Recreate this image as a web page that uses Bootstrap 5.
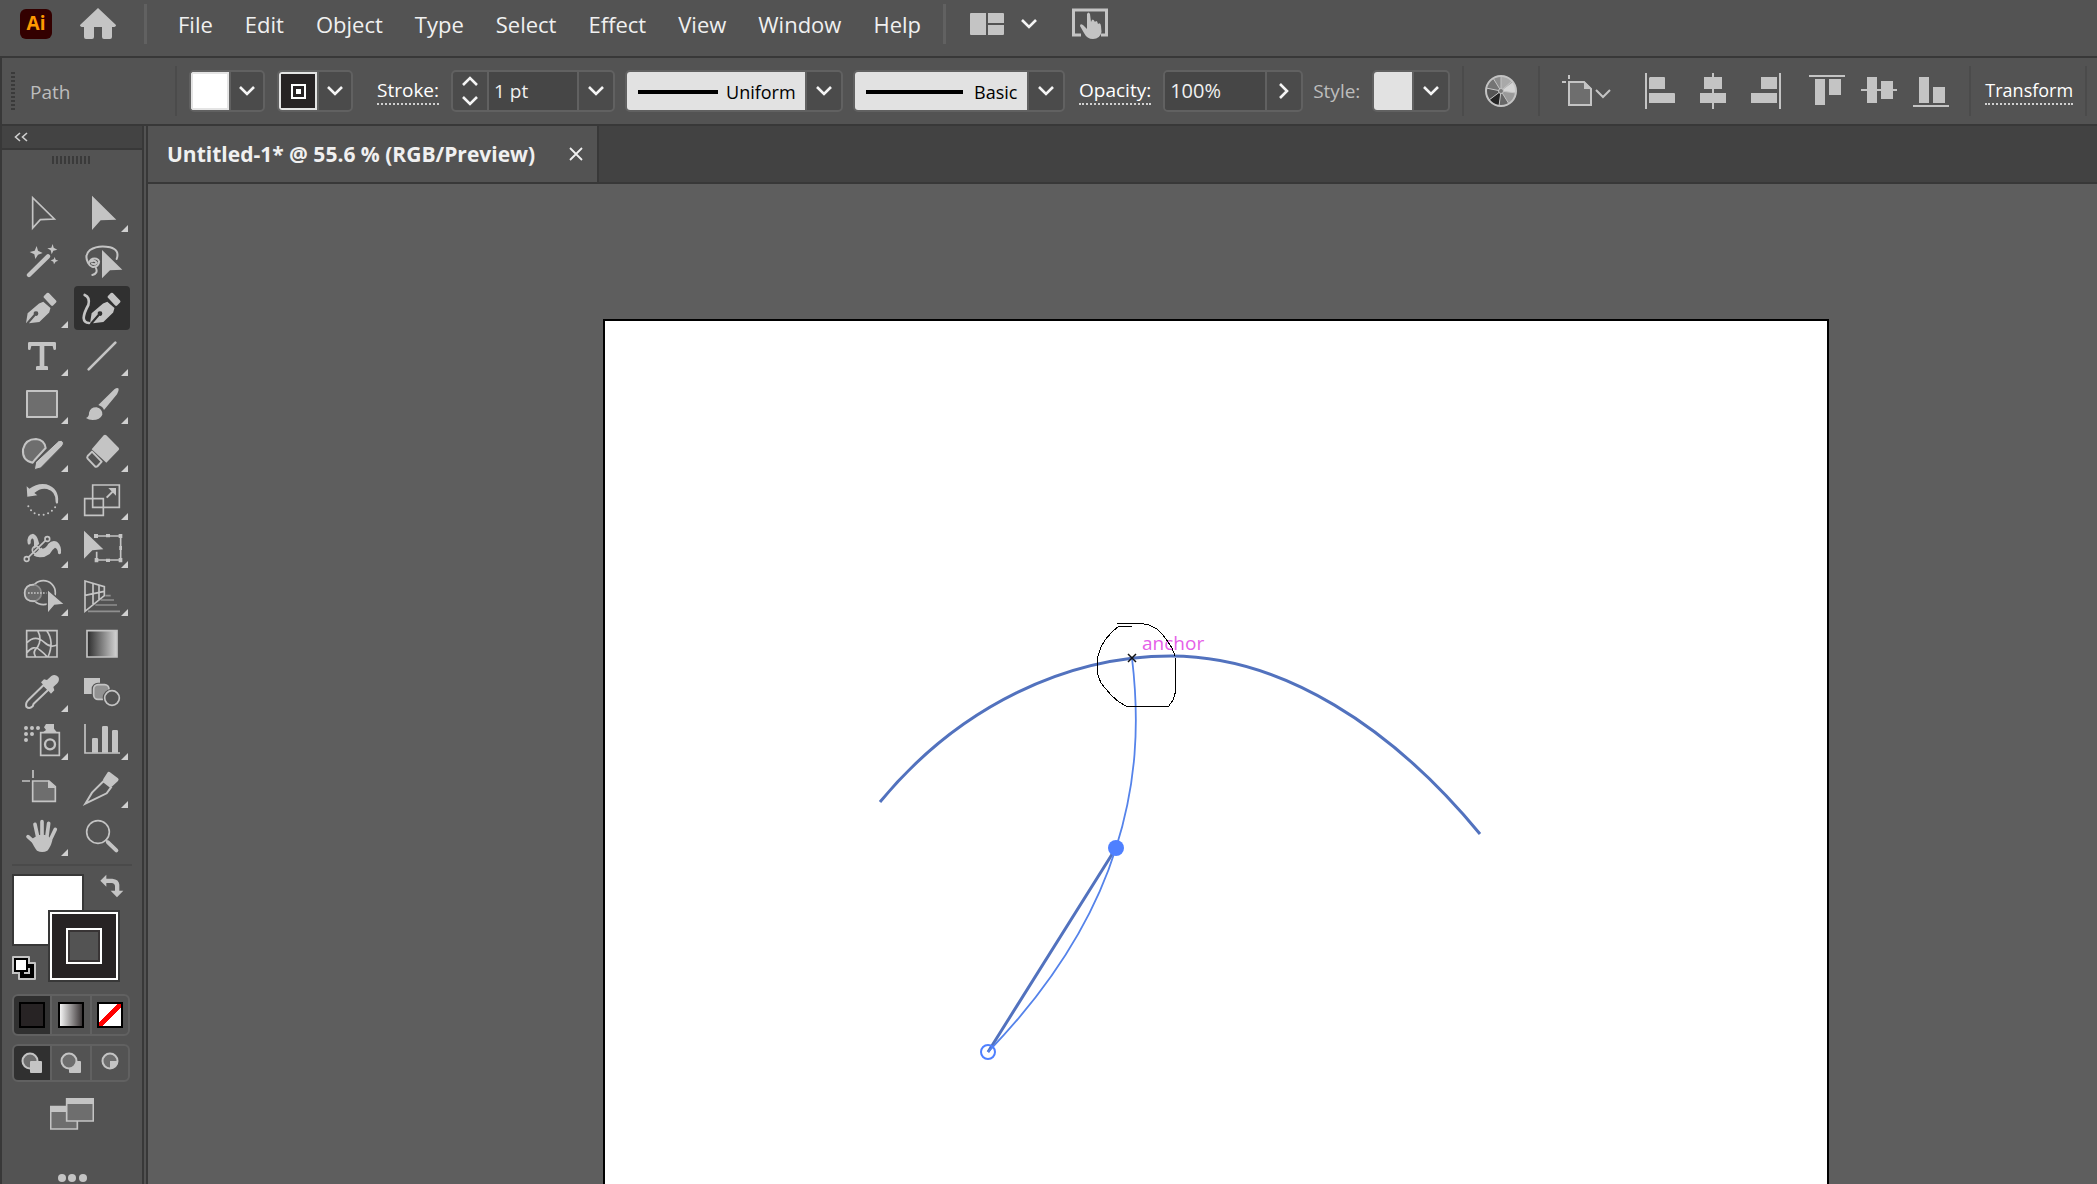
<!DOCTYPE html>
<html lang="en">
<head>
<meta charset="utf-8">
<meta name="viewport" content="width=device-width, initial-scale=1">
<title>Untitled-1</title>
<link rel="stylesheet" href="https://cdn.jsdelivr.net/npm/bootstrap@5.3.0/dist/css/bootstrap.min.css">
<style>
:root{--ui:#535353;--edge:#383838;--rim:#616161;--field:#464646;--ico:#c4c4c4}
body{background:#5e5e5e;color:#f0f0f0;font-family:"Open Sans","Noto Sans",sans-serif;font-size:19px;line-height:24px}
svg{display:block;flex:none}
button,input,select{font:inherit;color:inherit;background:none;border:0;border-radius:0;padding:0;margin:0}
select{appearance:none}
.app-menu{background:var(--ui);height:58px;border-bottom:2px solid var(--edge);padding:0 20px 8px;font-size:22px}
.app-menu a{color:#f0f0f0;text-decoration:none}
.menu-list{gap:32px;margin:0 22px 0 31px}
.ai-logo{width:32px;height:30px;border-radius:6px;background:#330000;color:#ff9a00;font-size:19px;font-weight:700;line-height:29px;text-align:center}
.menu-rule{width:3px;height:40px;background:#616161}
.home-btn{margin:0 28px 0 28px}
.touch-btn{margin-left:34px}
.control-bar{background:var(--ui);height:68px;border-bottom:2px solid var(--edge);border-left:2px solid var(--edge);padding-left:9px;overflow:hidden}
.control-bar>*{flex:none}
.bar-rule{width:2px;height:50px;background:#4b4b4b}
.panel-name{width:160px;padding:2px 0 0 15px}
.grip-v{width:4px;height:38px;background:repeating-linear-gradient(#3a3a3a 0 2px,transparent 2px 4px)}
.grip-h{width:38px;height:8px;margin:6px 0 0 50px;background:repeating-linear-gradient(90deg,#3a3a3a 0 2px,transparent 2px 4px)}
.combo{height:42px;border:2px solid var(--rim);border-radius:5px;background:#4b4b4b;overflow:hidden}
.combo>*+*{border-left:2px solid var(--rim)}
.drop{width:36px;flex:none;display:flex;align-items:center;justify-content:center}
.chip{width:38px;flex:none}
.chip-line{border:2px solid #e4e4e4}
.chip-line+.drop{width:34px}
.field{background:var(--field);padding-left:5px}
.field-wide{width:100px;font-size:20px}
.field-slim{width:90px}
.spin{width:34px;display:flex;flex-direction:column;align-items:center;justify-content:center;gap:10px}
.sample{background:#e2e2e2;color:#000;display:flex;align-items:center;justify-content:space-between;padding:2px 9px 0 11px;font-size:18px}
.dotted{color:#fff;text-decoration:none;line-height:26px;border-bottom:2px dotted #d0d0d0}
.soft{color:#bdbdbd}
.gap-t{margin-left:10px}
.gap-s{margin-left:12px}
.gap-o{margin-left:14px}
.gap-m{margin-left:24px}
.side{width:146px;background:var(--ui);border-left:2px solid var(--edge);flex:none}
.side-in{border-right:2px solid var(--edge);width:142px;height:100%}
.side-head{height:24px;background:#434343;border-bottom:2px solid var(--edge);padding-left:12px}
.tools{display:grid;grid-template-columns:56px 56px;gap:4px;padding:26px 0 0 12px}
.tool{position:relative;width:56px;height:44px;border-radius:4px}
.tool svg{width:56px;height:44px}
.tool.on{background:#303030}
.more::after{content:"";position:absolute;right:2px;bottom:2px;width:7px;height:7px;background:#d0d0d0;clip-path:polygon(100% 0,100% 100%,0 100%)}
.line{fill:none;stroke:var(--ico);stroke-width:6;stroke-linecap:round;stroke-linejoin:round}
.solid{fill:var(--ico);stroke:none}
.side-rule{height:2px;margin:6px 10px 0 10px;background:#4a4a4a}
.paint{display:grid;grid-template-columns:36px 36px 36px 12px;grid-template-rows:36px 36px 36px;margin:8px 0 0 10px}
.p-fill{grid-area:1/1/3/3;background:#fff;border:2px solid var(--edge)}
.p-stroke{grid-area:2/2/4/4;background:#272324;border:2px solid var(--edge);outline:2px solid #fff;outline-offset:-4px;display:grid;place-items:center}
.p-stroke span{width:36px;height:36px;border:2px solid #fff;background:#535353;outline:2px solid #383435;outline-offset:-4px}
.p-swap{grid-area:1/3/2/5;justify-self:end;align-self:start;margin-right:8px}
.p-reset{grid-area:3/1/4/2;align-self:end;margin-bottom:2px}
.seg{margin-left:10px;width:118px}
.seg button{flex:1 1 0;border:2px solid var(--rim);display:grid;place-items:center}
.seg button+button{margin-left:-2px}
.seg button:nth-child(2){flex:0 0 42px}
.seg button:first-child{background:#303030;border-radius:6px 0 0 6px}
.seg button:last-child{border-radius:0 6px 6px 0}
.seg-a{height:42px;margin-top:12px}
.seg-b{height:38px;margin-top:8px}
.swatch-s{width:26px;height:26px;border:2px solid #000}
.now{background:#272324}
.fade-bw{background:linear-gradient(90deg,#f4f4f4,#3a3536)}
.none{background:linear-gradient(135deg,#fff 43%,#f00 43% 57%,#fff 57%)}
.screen-btn{margin:16px 0 0 48px}
.dots-btn{margin:44px 0 0 56px}
.stage{min-width:0;border-left:2px solid var(--edge)}
.tab-bar{height:58px;background:#424242;border-bottom:2px solid var(--edge)}
.doc-tab{background:var(--ui);border-right:2px solid var(--edge);padding:0 14px 0 19px;gap:34px;font-weight:700;font-size:21px}
.board{width:1226px;margin:135px 0 0 455px;background:#fff;border:2px solid #000;border-bottom:0;flex:1 1 auto;min-height:0;overflow:hidden}
.align-set{gap:24px}
.align-row{gap:16px;margin-left:28px}
</style>
<script src="https://cdn.jsdelivr.net/npm/bootstrap@5.3.0/dist/js/bootstrap.bundle.min.js"></script>
</head>
<body class="vh-100 d-flex flex-column overflow-hidden">
<svg width="0" height="0" class="position-absolute" aria-hidden="true">
  <symbol id="down" viewBox="0 0 18 12"><path d="M2 2l7 7 7-7" fill="none" stroke="#f4f4f4" stroke-width="2.6"/></symbol>
  <linearGradient id="gr"><stop offset="0" stop-color="#2c2c2c"/><stop offset="1" stop-color="#d4d4d4"/></linearGradient>
  <symbol id="nib" viewBox="0 0 100 100"><path class="solid" d="M2 97L7 66 42 36 55 31 77 50 73 64 43 93 11 97 31 74A7 7 0 1 0 26 69Z"/><path class="solid" d="M57 19Q54 16 57 13L66 4Q69 2 72 4L94 27Q97 30 94 33L85 42Q82 45 79 42Z"/></symbol>
</svg>

<header class="app-menu d-flex align-items-center flex-shrink-0">
  <div class="ai-logo">Ai</div>
  <button class="home-btn" aria-label="Home"><svg width="36" height="32" viewBox="0 0 36 32"><path class="solid" d="M18 0L36 17Q36 19 33 19H32V29Q32 31 30 31H24Q22 31 22 29V19H14V29Q14 31 12 31H6Q4 31 4 29V19H3Q0 19 0 17Z"/></svg></button>
  <div class="menu-rule"></div>
  <nav class="menu-list d-flex"><a href="#">File</a><a href="#">Edit</a><a href="#">Object</a><a href="#">Type</a><a href="#">Select</a><a href="#">Effect</a><a href="#">View</a><a href="#">Window</a><a href="#">Help</a></nav>
  <div class="menu-rule"></div>
  <button class="gap-m d-flex align-items-center gap-3" aria-label="Arrange documents"><svg width="34" height="22" viewBox="0 0 34 22"><path class="solid" d="M1 0H16V22H1Q0 22 0 21V1Q0 0 1 0ZM18 0H33Q34 0 34 1V10H18ZM18 12H34V21Q34 22 33 22H18Z"/></svg><svg width="18" height="12"><use href="#down"/></svg></button>
  <button class="touch-btn" aria-label="Touch workspace"><svg width="36" height="32" viewBox="0 0 36 32"><path d="M9 27H1.500V2H34.500V27H29" fill="none" stroke="#c4c4c4" stroke-width="3"/><path d="M15 6Q16.500 3 18 6L19 14Q20.500 9 23 14Q25 11 26 16Q28.500 14 29 18L29.500 24Q28 31 21 31Q15 31 12 25L8 18Q8 15 11 17L15 21Z" fill="#c4c4c4"/></svg></button>
</header>

<section class="control-bar d-flex align-items-center flex-shrink-0" aria-label="Control panel">
  <div class="grip-v"></div>
  <span class="soft panel-name">Path</span>
  <div class="bar-rule"></div>
  <div class="combo d-flex gap-s"><button class="chip chip-line bg-white" aria-label="Fill"></button><button class="drop" aria-label="Fill menu"><svg width="18" height="12"><use href="#down"/></svg></button></div>
  <div class="combo d-flex gap-s"><button class="chip chip-line now" aria-label="Stroke colour"><svg width="34" height="34" viewBox="0 0 34 34"><path d="M11 11H24V24H11Z" fill="none" stroke="#fff" stroke-width="2"/><path d="M15 15H20V20H15Z" fill="#fff"/></svg></button><button class="drop" aria-label="Stroke colour menu"><svg width="18" height="12"><use href="#down"/></svg></button></div>
  <label class="dotted gap-m" for="weight">Stroke:</label>
  <div class="combo d-flex gap-s"><button class="spin" aria-label="Step stroke weight"><svg width="16" height="10" viewBox="0 0 16 10"><path d="M1 9L8 2L15 9" fill="none" stroke="#f4f4f4" stroke-width="2.600"/></svg><svg width="16" height="10" viewBox="0 0 16 10"><path d="M1 1L8 8L15 1" fill="none" stroke="#f4f4f4" stroke-width="2.600"/></svg></button><input id="weight" class="field field-slim" value="1 pt"><button class="drop" aria-label="Stroke weight menu"><svg width="18" height="12"><use href="#down"/></svg></button></div>
  <div class="combo d-flex gap-t"><div class="sample" style="width:178px"><svg width="80" height="4"><rect width="80" height="4"/></svg><select aria-label="Width profile"><option>Uniform</option></select></div><span class="drop"><svg width="18" height="12"><use href="#down"/></svg></span></div>
  <div class="combo d-flex gap-t"><div class="sample" style="width:172px"><svg width="97" height="4"><rect width="97" height="4"/></svg><select aria-label="Brush"><option>Basic</option></select></div><span class="drop"><svg width="18" height="12"><use href="#down"/></svg></span></div>
  <label class="dotted gap-o" for="opacity">Opacity:</label>
  <div class="combo d-flex gap-s"><input id="opacity" class="field field-wide" value="100%"><button class="drop" aria-label="Opacity slider"><svg width="12" height="18" viewBox="0 0 12 18"><path d="M2 2l7 7-7 7" fill="none" stroke="#f4f4f4" stroke-width="2.600"/></svg></button></div>
  <span class="soft gap-t">Style:</span>
  <div class="combo d-flex gap-s"><button class="chip" style="background:#e2e2e2" aria-label="Graphic style"></button><button class="drop" aria-label="Style menu"><svg width="18" height="12"><use href="#down"/></svg></button></div>
  <div class="bar-rule gap-s"></div>
  <button style="margin:0 20px" aria-label="Recolor artwork"><svg width="34" height="34" viewBox="-17 -17 34 34"><circle r="15" fill="#8b8b8b"/><path d="M0 0L0-15A15 15 0 0 1 12-9Z" fill="#a9a9a9"/><path d="M0 0L12-9A15 15 0 0 1 15 2Z" fill="#d5d5d5"/><path d="M0 0L15 2A15 15 0 0 1 8 13Z" fill="#9a9a9a"/><path d="M0 0L8 13A15 15 0 0 1-2 15Z" fill="#666"/><path d="M0 0L-2 15A15 15 0 0 1-12 9Z" fill="#242424"/><path d="M0 0L-12 9A15 15 0 0 1-15-3Z" fill="#555"/><path d="M0 0L-15-3A15 15 0 0 1-8-13Z" fill="#747474"/><path d="M0 0L0-15M0 0L11-10M0 0L15 2M0 0L8 13M0 0L-2 15M0 0L-12 9M0 0L-15-3M0 0L-8-13" stroke="#c4c4c4"/><circle r="15" fill="none" stroke="#c4c4c4" stroke-width="2"/><circle r="2.500" fill="#777" stroke="#c4c4c4"/></svg></button>
  <div class="bar-rule"></div>
  <button style="margin:0 33px 0 22px" aria-label="Align to artboard"><svg width="50" height="32" viewBox="0 0 50 32"><path d="M7 0V4M0 7H4" stroke="#c4c4c4" stroke-width="2"/><path d="M7 7H22L29 14V30H7Z" fill="#6e6e6e" stroke="#c4c4c4" stroke-width="2"/><path d="M22 6L30 14H22Z" fill="#c4c4c4"/><path d="M34 15l7 7 7-7" fill="none" stroke="#c4c4c4" stroke-width="2"/></svg></button>
  <div class="d-flex align-set">
    <button aria-label="Align left"><svg width="30" height="36" viewBox="0 0 30 36"><path class="solid" d="M0 0H2V36H0ZM5 4H19Q20 4 20 5V16H4V5ZM4 20H29Q30 20 30 21V30H4Z"/></svg></button>
    <button aria-label="Align centre"><svg width="28" height="36" viewBox="0 0 28 36"><path class="solid" d="M13 0H15V36H13ZM5 4H23V16H5ZM1 20H27V30H1Z"/></svg></button>
    <button aria-label="Align right"><svg width="30" height="36" viewBox="0 0 30 36"><path class="solid" d="M28 0H30V36H28ZM10 4H26V16H10ZM0 20H26V30H0Z"/></svg></button>
  </div>
  <div class="d-flex align-row">
    <button aria-label="Align top"><svg width="36" height="36" viewBox="0 0 36 36"><path class="solid" d="M0 2H36V4H0ZM6 6H16V32H6ZM20 6H32V22H20Z"/></svg></button>
    <button aria-label="Align middle"><svg width="36" height="36" viewBox="0 0 36 36"><path class="solid" d="M0 16H36V18H0ZM6 4H16V30H6ZM20 8H32V26H20Z"/></svg></button>
    <button aria-label="Align bottom"><svg width="36" height="36" viewBox="0 0 36 36"><path class="solid" d="M0 32H36V34H0ZM6 4H16V30H6ZM20 14H32V30H20Z"/></svg></button>
  </div>
  <div class="bar-rule" style="margin:0 14px 0 20px"></div>
  <a class="dotted" style="font-size:18px" href="#">Transform</a>
  <div class="bar-rule gap-s"></div>
</section>

<div class="d-flex flex-grow-1" style="min-height:0">
<aside class="side"><div class="side-in">
  <button class="side-head d-flex align-items-center w-100" aria-label="Collapse tools"><svg width="14" height="10" viewBox="0 0 14 10"><path d="M6 1L1.500 5L6 9M13 1L8.500 5L13 9" fill="none" stroke="#cfcfcf" stroke-width="1.600"/></svg></button>
  <div class="grip-h"></div>
  <div class="tools">
    <button class="tool" aria-label="Direct selection"><svg viewBox="42 0 168 132"><path d="M98 23V114L121 89 163 87Z" fill="none" stroke="#c4c4c4" stroke-width="5"/></svg></button>
    <button class="tool more" aria-label="Selection"><svg viewBox="222 0 168 132"><path class="solid" d="M276 17V120L302 91 349 89Z"/></svg></button>

    <button class="tool" aria-label="Magic wand"><svg viewBox="42 144 168 132"><path d="M87 255L144 199" stroke="#c4c4c4" stroke-width="13" stroke-linecap="round"/><path class="solid" d="M110 168L114 182 128 189 114 194 106 207 103 193 89 186 104 182ZM158 162L161 173 172 179 160 182 155 193 152 181 142 175 154 173ZM164 201L167 209 175 212 167 215 162 223 160 215 152 211 161 208Z"/></svg></button>
    <button class="tool" aria-label="Lasso"><svg viewBox="222 144 168 132"><path class="line" d="M350 207Q360 180 330 172Q295 164 270 180Q252 195 264 218Q275 238 292 227Q304 212 289 206Q272 203 268 218M287 232Q296 250 277 255M274 214Q284 209 290 218Q286 225 276 221"/><path d="M306 180V265L330 241 367 239Z" fill="#c4c4c4"/></svg></button>

    <button class="tool more" aria-label="Pen"><svg viewBox="42 288 168 132"><use href="#nib" x="76" y="305" width="98" height="98"/></svg></button>
    <button class="tool on" aria-label="Curvature"><svg viewBox="222 288 168 132"><use href="#nib" x="268" y="305" width="98" height="98"/><path class="line" style="stroke-width:8" d="M254 315Q271 322 265 345Q252 368 251 384Q252 398 267 399"/></svg></button>

    <button class="tool more" aria-label="Type"><svg viewBox="42 432 168 132"><path class="solid" d="M88 456H164Q168 456 168 460V476Q168 480 164 480Q160 480 160 476L158 468H133V528H140Q144 528 144 532V540H108V532Q108 528 112 528H119V468H94L92 476Q92 480 88 480Q84 480 84 476V460Q84 456 88 456Z"/></svg></button>
    <button class="tool more" aria-label="Line"><svg viewBox="222 432 168 132"><path class="line" style="stroke-width:8" d="M266 538L346 458"/></svg></button>

    <button class="tool more" aria-label="Rectangle"><svg viewBox="42 576 168 132"><path class="line" style="fill:#6e6e6e" d="M81 603H171V681H81Z"/></svg></button>
    <button class="tool more" aria-label="Paintbrush"><svg viewBox="222 576 168 132"><path class="solid" d="M295 645L344 597Q352 591 356 596Q357 602 351 613L312 660Q309 650 295 645ZM258 684Q268 680 267 668Q272 651 290 652Q308 657 307 674Q300 690 278 690Q266 690 258 684Z"/></svg></button>

    <button class="tool more" aria-label="Shaper"><svg viewBox="42 30 168 132"><path class="line" style="fill:#6e6e6e" d="M98 128Q66 122 69 88Q76 57 108 57Q134 60 137 84L104 120Z"/><path d="M103 149L107 126 176 62Q184 58 190 66Q192 72 187 78L122 144Z" fill="#c4c4c4" stroke="#535353" stroke-width="3"/></svg></button>
    <button class="tool more" aria-label="Eraser"><svg viewBox="222 30 168 132"><path class="solid" d="M311 46Q315 42 319 46L356 83Q359 87 356 90L319 128 275 88Z"/><path class="line" d="M276 95L263 108Q260 112 263 116L285 139Q289 142 293 138L305 125Z"/></svg></button>

    <button class="tool more" aria-label="Rotate"><svg viewBox="42 174 168 132"><path class="solid" d="M80 199L88 206Q113 188 139 193Q179 206 174 248Q170 255 167 247Q169 214 141 207Q121 203 103 219L112 226 82 230Z"/><path d="M85 259Q100 286 127 285Q151 282 166 261" fill="none" stroke="#c4c4c4" stroke-width="6" stroke-linecap="round" stroke-dasharray="0 14"/></svg></button>
    <button class="tool more" aria-label="Scale"><svg viewBox="222 174 168 132"><path d="M278 195H358V262H278ZM254 236H310V286H254Z" fill="none" stroke="#c4c4c4" stroke-width="5"/><path d="M320 233L341 212" stroke="#c4c4c4" stroke-width="6"/><path class="solid" d="M325 204H348V227Z"/></svg></button>

    <button class="tool more" aria-label="Width"><svg viewBox="42 318 168 132"><path class="solid" d="M83 370Q79 344 99 341Q111 345 115 362Q119 379 128 386Q138 384 145 371Q156 359 171 365Q185 376 183 400Q178 406 174 400Q174 386 165 383Q157 388 149 402Q134 413 119 412Q97 410 97 397Q103 389 102 370Q102 353 95 356Q91 359 92 370Q86 378 83 370Z"/><path d="M80 417L142 356" stroke="#535353" stroke-width="12"/><path d="M85 412L137 361" stroke="#c4c4c4" stroke-width="5"/><circle cx="80" cy="417" r="7" fill="#535353" stroke="#c4c4c4" stroke-width="5"/><circle cx="108" cy="390" r="11" fill="none" stroke="#c4c4c4" stroke-width="5"/><circle cx="142" cy="357" r="7" fill="#535353" stroke="#c4c4c4" stroke-width="5"/></svg></button>
    <button class="tool more" aria-label="Free transform"><svg viewBox="222 318 168 132"><path d="M288 348H362V420H290V395" fill="none" stroke="#c4c4c4" stroke-width="5"/><path class="solid" d="M282 342H294V354H282ZM318 342H330V352H318ZM356 342H367V354H356ZM358 378H366V390H358ZM356 414H367V427H356ZM318 416H330V426H318ZM284 414H295V427H284Z"/><path d="M252 332V416L277 391 310 388Z" fill="#c4c4c4"/></svg></button>

    <button class="tool more" aria-label="Shape builder"><svg viewBox="42 462 168 132"><circle cx="130" cy="518" r="36" fill="none" stroke="#c4c4c4" stroke-width="5"/><circle cx="99" cy="519" r="25" fill="#6a6a6a" stroke="#8c8c8c" stroke-width="5"/><path d="M107 543Q74 547 74 518Q76 493 103 494" fill="none" stroke="#c4c4c4" stroke-width="5"/><path d="M84 519H140" stroke="#c4c4c4" stroke-width="5" stroke-dasharray="5 4"/><path d="M142 508V582L164 556 194 553Z" fill="#c4c4c4" stroke="#535353" stroke-width="4"/></svg></button>
    <button class="tool more" aria-label="Perspective grid"><svg viewBox="222 462 168 132"><path d="M255 483L313 500V527L255 574ZM279 490V552M297 496V538M255 526L313 514" fill="none" stroke="#c4c4c4" stroke-width="5"/><path d="M316 527H332M302 540H342M286 555H351M264 574H360" stroke="#8f8f8f" stroke-width="5"/></svg></button>

    <button class="tool" aria-label="Mesh"><svg viewBox="42 606 168 132"><path d="M80 632H171V711H80ZM113 632Q127 657 113 681Q96 695 107 711M80 669Q105 642 133 667Q150 684 171 675M140 632Q164 664 144 711M80 699Q101 672 121 691Q134 701 142 711" fill="none" stroke="#c4c4c4" stroke-width="5"/></svg></button>
    <button class="tool" aria-label="Gradient"><svg viewBox="222 606 168 132"><path d="M261 632H351V711H261Z" fill="url(#gr)" stroke="#c4c4c4" stroke-width="5"/></svg></button>

    <button class="tool more" aria-label="Eyedropper"><svg viewBox="42 60 168 132"><path class="line" d="M131 105L85 150Q76 158 79 170Q88 178 98 169L101 161 145 119Z"/><path class="solid" d="M123 97L132 88 141 90 154 78Q165 71 175 81Q180 90 172 100L160 111 163 121 153 131Z"/></svg></button>
    <button class="tool" aria-label="Blend"><svg viewBox="222 60 168 132"><path class="solid" d="M252 84H300V132H252Z"/><rect x="281" y="104" width="46" height="44" rx="13" fill="#929292" stroke="#535353" stroke-width="12"/><rect x="281" y="104" width="46" height="44" rx="13" fill="#929292" stroke="#c4c4c4" stroke-width="5"/><circle cx="336" cy="144" r="22" fill="#535353" stroke="#535353" stroke-width="12"/><circle cx="336" cy="144" r="22" fill="#535353" stroke="#c4c4c4" stroke-width="5"/></svg></button>

    <button class="tool more" aria-label="Symbol sprayer"><svg viewBox="42 204 168 132"><path d="M122 248H178V316H122Z" fill="none" stroke="#c4c4c4" stroke-width="5"/><circle cx="150" cy="283" r="15" fill="none" stroke="#c4c4c4" stroke-width="7"/><path class="solid" d="M138 222H162V236L170 246H130L138 240 132 232Z"/><path d="M78 234H116M78 252H98M78 270H79" stroke="#c4c4c4" stroke-width="12" stroke-linecap="round" stroke-dasharray="0 18"/></svg></button>
    <button class="tool more" aria-label="Graph"><svg viewBox="222 204 168 132"><path d="M255 222V309H360" fill="none" stroke="#c4c4c4" stroke-width="5"/><path class="solid" d="M276 308V268Q276 264 280 264H290Q294 264 294 268V308ZM306 308V232Q306 228 310 228H320Q324 228 324 232V308ZM336 308V244Q336 240 340 240H350Q354 240 354 244V308Z"/></svg></button>

    <button class="tool" aria-label="Artboard"><svg viewBox="42 348 168 132"><path d="M99 360V384M66 393H90" stroke="#c4c4c4" stroke-width="5"/><path d="M98 393H147L166 410V454H98Z" fill="#6e6e6e" stroke="#c4c4c4" stroke-width="5"/><path class="solid" d="M144 390L168 414H144Z"/></svg></button>
    <button class="tool more" aria-label="Slice"><svg viewBox="222 348 168 132"><path d="M256 461L276 428 310 394 333 412 320 430Z" fill="none" stroke="#c4c4c4" stroke-width="6"/><path class="solid" d="M322 368Q325 363 329 366L354 385Q358 389 354 393L337 409Q333 412 330 409L311 394Q307 391 310 387Z"/></svg></button>

    <button class="tool more" aria-label="Hand"><svg viewBox="42 492 168 132"><path d="M84 560L107 580M105 523L114 565M126 515V565M146 520L140 565M166 538L146 580" stroke="#c4c4c4" stroke-width="11" stroke-linecap="round"/><path class="solid" d="M110 558Q126 550 144 558L157 571Q152 592 142 602Q127 610 111 602Q102 591 92 569Z"/></svg></button>
    <button class="tool" aria-label="Zoom"><svg viewBox="222 492 168 132"><circle cx="294" cy="546" r="34" fill="none" stroke="#c4c4c4" stroke-width="5"/><path d="M316 569L322 575" stroke="#c4c4c4" stroke-width="6"/><path d="M324 577L349 601" stroke="#c4c4c4" stroke-width="12" stroke-linecap="round"/></svg></button>
  </div>
  <div class="side-rule"></div>
  <div class="paint">
    <button class="p-fill" aria-label="Fill colour"></button>
    <button class="p-stroke" aria-label="Stroke colour"><span></span></button>
    <button class="p-swap" aria-label="Swap fill and stroke"><svg width="24" height="24" viewBox="303 46 72 72"><path class="solid" d="M304 66L322 48V60H340Q360 62 361 78V96H373L354 116 335 96H348V82Q347 74 338 73H322V84Z"/></svg></button>
    <button class="p-reset" aria-label="Default fill and stroke"><svg width="24" height="24" viewBox="36 288 72 72"><path class="solid" d="M36 291Q36 288 39 288H87Q90 288 90 291V306H105Q108 306 108 309V357Q108 360 105 360H57Q54 360 54 357V342H36Z"/><path d="M60 312H102V354H60Z"/><path d="M72 324H90V342H72Z" fill="#c4c4c4"/><path d="M45 297H81V333H45Z" fill="#fff" stroke="#000" stroke-width="6"/></svg></button>
  </div>
  <div class="seg seg-a d-flex">
    <button aria-label="Colour"><span class="swatch-s now"></span></button>
    <button aria-label="Gradient fill"><span class="swatch-s fade-bw"></span></button>
    <button aria-label="None"><span class="swatch-s none"></span></button>
  </div>
  <div class="seg seg-b d-flex">
    <button aria-label="Draw normal"><svg width="22" height="22" viewBox="0 0 22 22"><circle cx="9" cy="9" r="7.500" fill="#6e6e6e" stroke="#c4c4c4" stroke-width="2"/><rect class="solid" x="9" y="9" width="12" height="12" rx="1"/></svg></button>
    <button aria-label="Draw behind"><svg width="22" height="22" viewBox="0 0 22 22"><rect class="solid" x="9" y="9" width="12" height="12" rx="1"/><circle cx="9" cy="9" r="7.500" fill="#6e6e6e" stroke="#c4c4c4" stroke-width="2"/></svg></button>
    <button aria-label="Draw inside"><svg width="22" height="22" viewBox="0 0 22 22"><circle cx="11" cy="9" r="7.500" fill="#6e6e6e" stroke="#c4c4c4" stroke-width="2"/><path class="solid" d="M11 9H19V11Q17 16 11 17Z"/></svg></button>
  </div>
  <button class="d-block screen-btn" aria-label="Screen mode"><svg width="44" height="32" viewBox="150 714 132 96"><path d="M152 740H232V807H152Z" fill="#6e6e6e" stroke="#c4c4c4" stroke-width="5"/><path class="solid" d="M150 738H200V756H150Z"/><path d="M200 716H280V783H200Z" fill="#6e6e6e" stroke="#c4c4c4" stroke-width="5"/><path class="solid" d="M198 714H282V732H198Z"/></svg></button>
  <button class="d-block dots-btn" aria-label="Edit toolbar"><svg width="30" height="8" viewBox="0 0 30 8"><g class="solid"><circle cx="4" cy="4" r="4"/><circle cx="14" cy="4" r="4"/><circle cx="25" cy="4" r="4"/></g></svg></button>
</div></aside>

<main class="stage d-flex flex-column flex-grow-1">
  <div class="tab-bar d-flex flex-shrink-0"><div class="doc-tab d-flex align-items-center"><span>Untitled-1* @ 55.6 % (RGB/Preview)</span><button aria-label="Close document"><svg width="14" height="14" viewBox="0 0 14 14"><path d="M1 1L13 13M13 1L1 13" stroke="#f0f0f0" stroke-width="1.800"/></svg></button></div></div>
  <div class="board">
    <svg width="1222" height="863" viewBox="605 321 1222 863" fill="none">
      <g stroke-width="3" stroke="#5272be"><path d="M880 802C960 705 1068 656 1171 656C1282 656 1392 727 1480 834M988 1052L1116 848"/></g>
      <path d="M1132 658C1140 725 1136 785 1116 848C1092 925 1044 994 988 1052" stroke="#5583ea" stroke-width="1.800"/>
      <circle cx="1116" cy="848" r="8" fill="#4f80ff"/><circle cx="988" cy="1052" r="7" stroke="#4f80ff" stroke-width="2"/>
      <text x="1142" y="650" font-size="19" fill="#e560e8">anchor</text>
      <path d="M1117 623.500H1142L1149 625 1157 629 1163 635 1168 642 1172 648 1175 656 1175.500 692 1173 700 1168.500 706.500H1127L1119 702 1112 696 1105 688 1101 683 1097.500 674V658L1101 647 1105 640 1112 632 1119 626H1132" stroke="#000" shape-rendering="crispEdges"/>
      <path d="M1128 654L1136 662M1136 654L1128 662" stroke="#111" stroke-width="1.500"/>
    </svg>
  </div>
</main>
</div>
</body>
</html>
